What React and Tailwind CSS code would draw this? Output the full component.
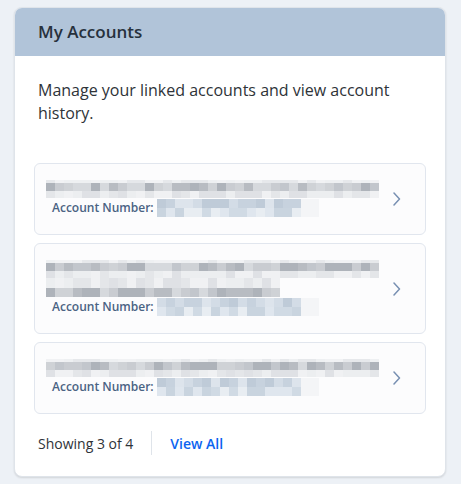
import React from "react";

function rng(seed) {
  let s = seed;
  return () => {
    s = (s * 9301 + 49297) % 233280;
    return s / 233280;
  };
}

function Pixels({ seed, cols, rows, cellW, palette, extra = 0 }) {
  const r = rng(seed);
  return (
    <div className="flex flex-col">
      {rows.map((h, ri) => (
        <div key={ri} className="flex">
          {Array.from({ length: cols + extra }).map((_, ci) => {
            const faded = ci >= cols;
            const p = palette[ri % palette.length];
            const c = faded ? "#f4f5f7" : p[Math.floor(r() * p.length)];
            return <div key={ci} style={{ width: cellW, height: h, background: c }} />;
          })}
        </div>
      ))}
    </div>
  );
}

const nameRows = [
  ["#eef0f2", "#e6e8eb", "#f1f2f4"],
  ["#c2c6cc", "#b8bcc2", "#cfd2d6", "#aeb3ba", "#d6d9dd", "#c9ccd1"],
  ["#e4e6e9", "#eceef0", "#dfe1e5", "#f0f1f3"],
];

const numRows = [
  ["#d3dce6", "#c7d2de", "#dde4ec", "#bfcbd8"],
  ["#dfe6ee", "#d0dae4", "#e8edf2", "#c9d4df"],
];

function AccountItem({ seed, twoLine }) {
  return (
    <div className="flex items-center rounded-md border border-[#e1e6ee] bg-[#fcfcfd] pl-[11px] pr-[24px]">
      <div className="flex-1 flex flex-col pt-[16px] pb-[17px]">
        <Pixels seed={seed} cols={37} rows={[3, 8, 7]} cellW={9} palette={nameRows} />
        {twoLine && (
          <Pixels seed={seed + 7} cols={26} rows={[10, 9]} cellW={9} palette={[nameRows[2], nameRows[1]]} />
        )}
        <div className="flex items-center mt-[1px] pl-[6px]">
          <span className="text-[12px] font-semibold text-[#4a6383] leading-[18px]">Account Number:</span>
          <div className="ml-[3px]">
            <Pixels seed={seed + 3} cols={16} rows={[9, 9]} cellW={9} palette={numRows} extra={2} />
          </div>
        </div>
      </div>
      <svg width="8" height="14" viewBox="0 0 8 14" fill="none" className="shrink-0">
        <path d="M1 1L6.5 7L1 13" stroke="#7890b2" strokeWidth="1.5" strokeLinecap="round" strokeLinejoin="round" />
      </svg>
    </div>
  );
}

export default function App() {
  return (
    <div className="w-[461px] h-[484px] bg-[#edf1f6] pt-[7px] px-[14px]" style={{ fontFamily: '"Open Sans", sans-serif' }}>
      <div className="w-[432px] h-[470px] bg-white rounded-lg border border-[#dfe4ea] shadow-[0_1px_2px_rgba(0,0,0,0.12)] overflow-hidden flex flex-col">
        <div className="h-[48px] bg-[#b1c4d9] flex items-center px-[23px] shrink-0">
          <h2 className="text-[17px] font-semibold text-[#27313d]">My Accounts</h2>
        </div>
        <div className="px-[19px] flex flex-col">
          <p className="px-[4px] pt-[23px] text-[16px] leading-[23px] text-[#2e3338]">
            Manage your linked accounts and view account history.
          </p>
          <div className="mt-[38px] flex flex-col gap-[8px]">
            <AccountItem seed={11} />
            <AccountItem seed={23} twoLine />
            <AccountItem seed={41} />
          </div>
          <div className="flex items-center mt-[17px] px-[4px]">
            <span className="text-[14px] text-[#2e3338]">Showing 3 of 4</span>
            <div className="w-px h-[24px] bg-[#dfe4ea] mx-[18px]" />
            <a className="text-[14px] font-semibold text-[#0c64f0]">View All</a>
          </div>
        </div>
      </div>
    </div>
  );
}
